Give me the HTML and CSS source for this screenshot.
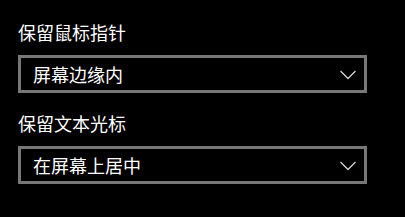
FILE: index.html
```html
<!DOCTYPE html>
<html>
<head>
<meta charset="utf-8">
<link rel="stylesheet" href="styles.css">
</head>
<body>
<div class="panel">
  <div class="label first">保留鼠标指针</div>
  <div class="select">
    <span class="value">屏幕边缘内</span>
    <svg class="chev" width="16" height="10" viewBox="0 0 16 10"><polyline points="0.5,1 8,8.5 15.5,1" fill="none" stroke="#d0d0d0" stroke-width="1.4"/></svg>
  </div>
  <div class="label second">保留文本光标</div>
  <div class="select">
    <span class="value">在屏幕上居中</span>
    <svg class="chev" width="16" height="10" viewBox="0 0 16 10"><polyline points="0.5,1 8,8.5 15.5,1" fill="none" stroke="#d0d0d0" stroke-width="1.4"/></svg>
  </div>
</div>
</body>
</html>
```
FILE: styles.css
```css
html, body {
  margin: 0;
  padding: 0;
  background: #000;
}
body {
  width: 405px;
  height: 217px;
  overflow: hidden;
  font-family: "Noto Sans CJK SC", "Microsoft YaHei", sans-serif;
  color: #fff;
}
.panel {
  padding: 20px 0 0 18px;
  display: flex;
  flex-direction: column;
  align-items: flex-start;
}
.label {
  font-size: 18px;
  line-height: 24px;
  margin-bottom: 11px;
}
.label.second {
  margin-top: 18px;
}
.select {
  box-sizing: border-box;
  width: 349px;
  height: 38px;
  border: 3px solid #777777;
  display: flex;
  align-items: center;
  justify-content: space-between;
  padding: 0 8px 0 12px;
}
.value {
  font-size: 18px;
  line-height: 24px;
}
.chev {
  display: block;
  margin-top: 1px;
}
```
